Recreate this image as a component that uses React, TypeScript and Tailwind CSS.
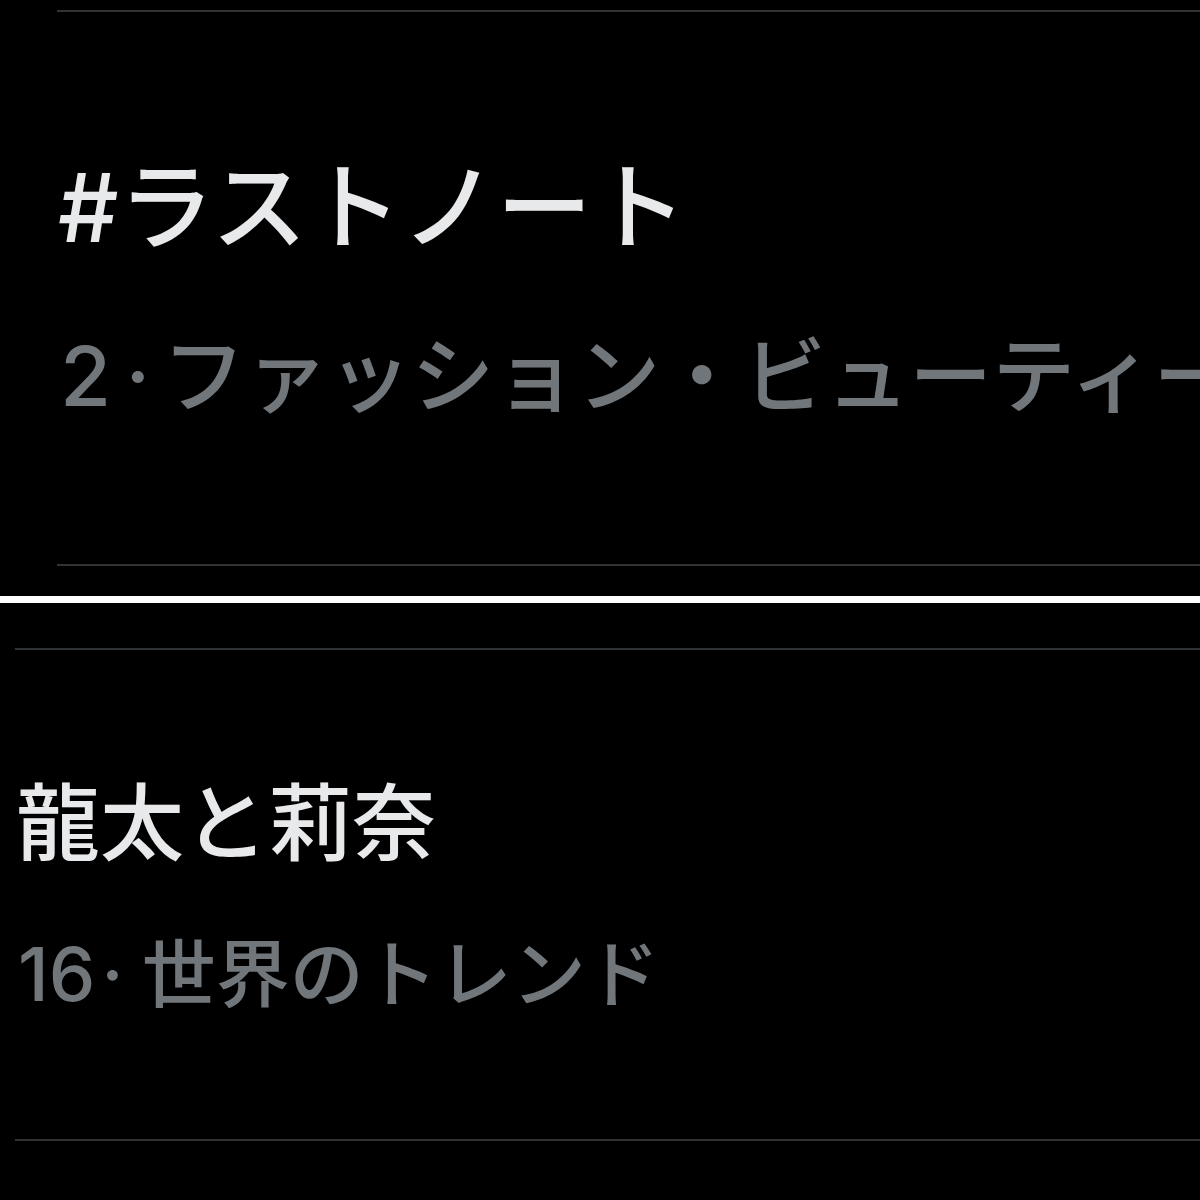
import React from 'react';

const font = { fontFamily: 'Inter, "Noto Sans CJK JP", sans-serif' };

const Divider = ({ left }: { left: string }) => <div className={`${left} h-[2px] bg-[#2f3336]`} />;

export default function App() {
    return (
        <div className="w-[1200px] h-[1200px] bg-black overflow-hidden" style={font}>
            <section className="h-[596px] flex flex-col">
                <div className="mt-[10px]">
                    <Divider left="ml-[57px]" />
                </div>
                <div className="pl-[58px] mt-[148px] text-[95px] leading-[95px] font-medium text-[#e7e9ea] whitespace-nowrap">
                    #ラストノート
                </div>
                <div className="pl-[60px] mt-[80px] text-[83px] leading-[83px] font-medium text-[#71767b] whitespace-nowrap">
                    2<span className="ml-[14px]">·</span><span className="ml-[12px]">ファッション・ビューティー</span>
                </div>
                <div className="mt-[146px]">
                    <Divider left="ml-[57px]" />
                </div>
            </section>
            <div className="h-[7px] bg-white" />
            <section className="h-[597px] flex flex-col">
                <div className="mt-[45px]">
                    <Divider left="ml-[15px]" />
                </div>
                <div className="pl-[16px] mt-[132px] text-[84px] leading-[84px] font-medium text-[#e7e9ea] whitespace-nowrap">
                    龍太と莉奈
                </div>
                <div className="pl-[18px] mt-[71px] text-[74px] leading-[74px] font-medium text-[#71767b] whitespace-nowrap">
                    16<span className="ml-[6px]">·</span><span className="ml-[18px]">世界のトレンド</span>
                </div>
                <div className="mt-[128px]">
                    <Divider left="ml-[15px]" />
                </div>
            </section>
        </div>
    );
}
